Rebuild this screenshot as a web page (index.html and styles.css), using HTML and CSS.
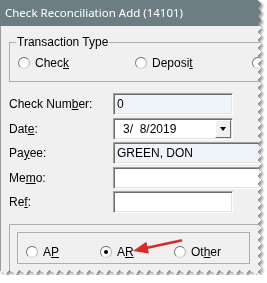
FILE: index.html
```html
<!DOCTYPE html>
<html>
<head>
    <meta charset="UTF-8">
    <title>Check Reconciliation Add (14101)</title>
    <link rel="stylesheet" href="styles.css">
</head>
<body>
    <div class="shot">
        <div class="window">
            <div class="titlebar">Check Reconciliation Add (14101)</div>
            <div class="content">
                <fieldset class="group">
                    <legend>Transaction Type</legend>
                    <div class="radio-row type-row">
                        <label class="radio"><span class="mark"></span>Chec<u>k</u></label>
                        <label class="radio"><span class="mark"></span>Deposi<u>t</u></label>
                        <label class="radio"><span class="mark"></span></label>
                    </div>
                </fieldset>

                <div class="fields">
                    <label>Check Num<u>b</u>er:</label>
                    <div class="field tinted short">0</div>
                    <label>Dat<u>e</u>:</label>
                    <div class="field short date">
                        <span class="date-text">3/&nbsp;&nbsp;8/2019</span>
                        <span class="drop"><span class="caret"></span></span>
                    </div>
                    <label>Pa<u>y</u>ee:</label>
                    <div class="field tinted long">GREEN, DON</div>
                    <label>Me<u>m</u>o:</label>
                    <div class="field long"></div>
                    <label>Re<u>f</u>:</label>
                    <div class="field short"></div>
                </div>

                <div class="outer-box">
                    <div class="inner-box">
                        <div class="radio-row account-row">
                            <label class="radio"><span class="mark"></span>A<u>P</u></label>
                            <label class="radio"><span class="mark on"></span>A<u>R</u></label>
                            <label class="radio"><span class="mark"></span>Ot<u>h</u>er</label>
                        </div>
                    </div>
                </div>
            </div>

            <!-- callout arrow pointing at AR -->
            <svg class="arrow" width="267" height="283" viewBox="0 0 267 283">
                <line x1="181" y1="240.5" x2="145" y2="248.3" stroke="#d52b2b" stroke-width="2.6" stroke-linecap="round"/>
                <polygon points="133,251 146.3,241.8 148.9,253.6" fill="#d52b2b"/>
            </svg>
        </div>
    </div>
</body>
</html>
```

FILE: styles.css
```css
* {
    margin: 0;
    padding: 0;
    box-sizing: border-box;
}
body {
    background: #fff;
    font-family: "Liberation Sans", Arial, sans-serif;
    font-size: 12px;
    color: #000;
}
.shot {
    width: 261px;
    filter: drop-shadow(2px 2px 1.5px rgba(0,0,0,0.45));
}
.window {
    position: relative;
    width: 261px;
    height: 275px;
    background: #f0f0f0;
    overflow: hidden;
    -webkit-mask:
        linear-gradient(#000 0 0) left top / calc(100% - 4px) calc(100% - 5px) no-repeat,
        conic-gradient(from 225deg at right, #000 90deg, #0000 0) right top / 4px 8px repeat-y,
        conic-gradient(from -45deg at bottom, #000 90deg, #0000 0) left bottom / 10px 5px repeat-x;
    mask:
        linear-gradient(#000 0 0) left top / calc(100% - 4px) calc(100% - 5px) no-repeat,
        conic-gradient(from 225deg at right, #000 90deg, #0000 0) right top / 4px 8px repeat-y,
        conic-gradient(from -45deg at bottom, #000 90deg, #0000 0) left bottom / 10px 5px repeat-x;
}
.titlebar {
    height: 26px;
    padding-left: 5px;
    line-height: 26px;
    background: #6c7e84;
    color: #fff;
    font-family: "Noto Sans", sans-serif;
    font-size: 11.5px;
    white-space: nowrap;
}
.content {
    height: 249px;
    padding: 9px 0 0 8px;
    border-left: 1px solid #9c9c9c;
}
.group {
    width: 300px;
    border: 1px solid #adadad;
    padding: 7px 0 11px 8px;
}
.group legend {
    margin-left: -2px;
    padding: 0 1px;
    line-height: 14px;
}
.radio-row {
    display: grid;
    height: 14px;
}
.type-row {
    grid-template-columns: 117px 117px 117px;
}
.account-row {
    grid-template-columns: 74px 74px 74px;
}
.radio {
    display: flex;
    align-items: center;
    white-space: nowrap;
    line-height: 14px;
}
.mark {
    position: relative;
    width: 12px;
    height: 12px;
    margin-right: 5px;
    border-radius: 50%;
    border: 1px solid;
    border-color: #6a6a6a #b8b8b8 #d8d8d8 #7a7a7a;
    background: radial-gradient(circle at 40% 40%, #fff 55%, #e4e4e4);
}
.mark.on::after {
    content: "";
    position: absolute;
    left: 3px;
    top: 3px;
    width: 4px;
    height: 4px;
    border-radius: 50%;
    background: #000;
}
.fields {
    display: grid;
    grid-template-columns: 104px auto;
    row-gap: 2.5px;
    margin-top: 11px;
}
.fields label {
    height: 22px;
    padding-top: 1px;
    line-height: 21px;
    white-space: nowrap;
}
.field {
    height: 22px;
    padding: 0 3px;
    line-height: 20px;
    background: #fff;
    border: 1px solid;
    border-color: #a0a0a0 #fff #fff #a0a0a0;
    box-shadow: inset 1px 1px 0 #6e6e6e, inset -1px -1px 0 #e3e3e3;
    white-space: nowrap;
}
.field.tinted {
    background: #eef4fa;
}
.field.short {
    width: 120px;
}
.field.long {
    width: 148px;
}
.date {
    display: flex;
    justify-content: space-between;
    padding: 1px 1px 1px 9px;
    line-height: 18px;
}
.drop {
    display: flex;
    align-items: center;
    justify-content: center;
    width: 16px;
    height: 18px;
    background: #f0f0f0;
    border: 1px solid;
    border-color: #fff #6e6e6e #6e6e6e #fff;
}
.caret {
    width: 0;
    height: 0;
    border-left: 3.5px solid transparent;
    border-right: 3.5px solid transparent;
    border-top: 4px solid #000;
}
.outer-box {
    width: 252px;
    height: 60px;
    margin-top: 11px;
    padding: 7px 0 0 7px;
    border-top: 1px solid #adadad;
    border-left: 1px solid #adadad;
}
.inner-box {
    width: 233px;
    height: 32px;
    padding: 12px 0 0 8px;
    border: 1px solid #adadad;
}
.arrow {
    position: absolute;
    left: 0;
    top: 0;
    pointer-events: none;
}
```
